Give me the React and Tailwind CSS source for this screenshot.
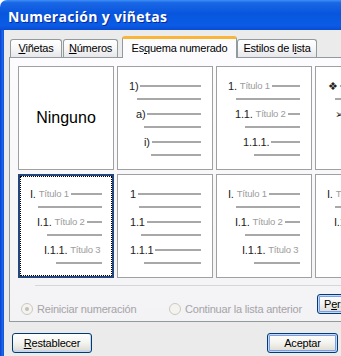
const ui = "font-['Liberation_Sans',Arial,sans-serif]"

function Rule({ className = '' }) {
  return <div className={`h-[2px] bg-[#a8a8a8] ${className}`} />
}

// one numbered level: text row + the line under it
function Level({ pl, num, title, line = true, sub, first }) {
  return (
    <>
      <div className={`flex h-[14px] items-center whitespace-nowrap ${first ? '' : 'mt-[7px]'} ${pl}`}>
        <span className="text-[11px] leading-none text-[#222]">{num}</span>
        {title && <span className="ml-[3px] text-[9.5px] leading-none text-[#9c9c9c]">{title}</span>}
        {line && <Rule className="ml-[2px] flex-1" />}
      </div>
      <Rule className={`mt-[5px] ${sub}`} />
    </>
  )
}

function Cell({ levels, selected, children }) {
  return (
    <div className="relative h-[104px] w-[96px] border border-[#a0a0a0] bg-white">
      {children || (
        <div className="flex flex-col pt-[12px] pr-[11px]">
          {levels.map((l, i) => <Level key={i} first={i === 0} {...l} />)}
        </div>
      )}
      {selected && (
        <div className="absolute -inset-px border-2 border-[#24467c]">
          <div className="absolute inset-0 border border-dotted border-black" />
        </div>
      )}
    </div>
  )
}

const outline = [
  { pl: 'pl-[11px]', num: 'I.', title: 'Título 1', sub: 'ml-[19px]' },
  { pl: 'pl-[18px]', num: 'I.1.', title: 'Título 2', sub: 'ml-[28px]' },
  { pl: 'pl-[25px]', num: 'I.1.1.', title: 'Título 3', line: false, sub: 'ml-[37px]' },
]

const cells = [
  null,
  [
    { pl: 'pl-[11px]', num: '1)', sub: 'ml-[19px]' },
    { pl: 'pl-[18px]', num: 'a)', sub: 'ml-[26px]' },
    { pl: 'pl-[26px]', num: 'i)', sub: 'ml-[33px]' },
  ],
  [
    { pl: 'pl-[11px]', num: '1.', title: 'Título 1', sub: 'ml-[19px]' },
    { pl: 'pl-[18px]', num: '1.1.', title: 'Título 2', sub: 'ml-[28px]' },
    { pl: 'pl-[26px]', num: '1.1.1.', sub: 'ml-[37px]' },
  ],
  [
    { pl: 'pl-[12px]', num: '❖', sub: 'ml-[19px]' },
    { pl: 'pl-[19px]', num: '➢', sub: 'ml-[26px]' },
    { pl: 'pl-[26px]', num: '■', sub: 'ml-[33px]' },
  ],
  outline,
  [
    { pl: 'pl-[12px]', num: '1', sub: 'ml-[21px]' },
    { pl: 'pl-[12px]', num: '1.1', sub: 'ml-[23px]' },
    { pl: 'pl-[12px]', num: '1.1.1', sub: 'ml-[26px]' },
  ],
  outline,
  outline,
]

function Tab({ children, className = '' }) {
  return (
    <div className={`flex h-[18px] items-center justify-center whitespace-nowrap rounded-t-[3px] border border-b-0 border-[#919b9c] bg-gradient-to-b from-white via-[#f7f7f7] to-[#e6e6ec] ${className}`}>
      {children}
    </div>
  )
}

function Radio({ checked, children }) {
  return (
    <div className="flex h-[14px] items-center whitespace-nowrap">
      <div className="flex h-[12px] w-[12px] shrink-0 items-center justify-center rounded-full border border-[#cbc9c0] bg-[#f4f3f0]">
        {checked && <div className="h-[4px] w-[4px] rounded-full bg-[#c2c0b8]" />}
      </div>
      <span className="ml-[4px] text-[#a5a4a8]">{children}</span>
    </div>
  )
}

function Button({ children, className = '', strong }) {
  return (
    <div className={`flex h-[20px] shrink-0 items-center whitespace-nowrap rounded-[3px] border border-[#003c74] bg-gradient-to-b from-white via-[#f3f3ef] to-[#dcd9ce] text-black ${strong ? 'shadow-[inset_0_0_0_1px_#c4d8fb,inset_0_0_0_2px_#7d9ee6]' : 'shadow-[inset_0_-2px_0_0_#c9d5ec,inset_-1px_0_0_0_#c9d5ec]'} ${className}`}>
      {children}
    </div>
  )
}

export default function App() {
  return (
    <div className={`flex h-[356px] w-[341px] flex-col overflow-hidden bg-white text-[11px] tracking-[-0.2px] ${ui}`}>
      {/* title bar */}
      <div className="flex h-[30px] shrink-0 items-center rounded-tl-[7px] bg-[linear-gradient(to_bottom,#3d8ff6_0%,#1a67e6_9%,#0856dd_45%,#0a5be6_85%,#0a4bd3_100%)] pl-[8px] pt-[2px]">
        <span className="font-['Open_Sans',sans-serif] text-[14px] font-bold tracking-[0.3px] text-white [text-shadow:1px_1px_#0b2a9a]">
          Numeración y viñetas
        </span>
      </div>

      <div className="flex min-w-0 flex-1">
        <div className="w-[4px] shrink-0 bg-[linear-gradient(to_right,#0a3fd0,#1a67e8_60%,#0b54da)]" />
        <div className="flex min-w-0 flex-1 flex-col bg-[#ecebec]">
          {/* tabs */}
          <div className="ml-[5px] mt-[6px] flex h-[21px] items-end">
            <Tab className="ml-[1px] w-[52px]"><span><u>V</u>iñetas</span></Tab>
            <Tab className="ml-[1px] w-[55px]"><span><u>N</u>úmeros</span></Tab>
            <div className="relative z-10 ml-[4px] -mb-px flex h-[22px] w-[115px] shrink-0 items-center justify-center whitespace-nowrap rounded-t-[3px] border-x border-t-[3px] border-[#919b9c] border-t-[#f9b43a] bg-[#fcfcfe] pb-[1px]">
              <span>Es<u>q</u>uema numerado</span>
            </div>
            <Tab className="w-[80px]"><span>Estilos de l<u>i</u>sta</span></Tab>
          </div>

          {/* panel */}
          <div className="ml-[5px] flex h-[265px] w-[340px] shrink-0 flex-col border border-[#919b9c] bg-gradient-to-b from-[#fcfcfe] to-[#f3f2f4] pl-[8px] pt-[8px]">
            <div className="grid grid-cols-[repeat(4,96px)] gap-x-[3px] gap-y-[4px]">
              {cells.map((c, i) =>
                i === 0 ? (
                  <Cell key={i}>
                    <div className="flex h-full items-center justify-center text-[16px] tracking-normal text-black">Ninguno</div>
                  </Cell>
                ) : (
                  <Cell key={i} levels={c} selected={i === 4} />
                )
              )}
            </div>
            <div className="ml-[17px] mt-[7px] h-px bg-[#d6d5d8]" />
            <div className="mt-[8px] flex items-start">
              <div className="ml-[3px] mt-[8px] w-[148px] shrink-0"><Radio checked>Reiniciar numeración</Radio></div>
              <div className="mt-[8px] w-[148px] shrink-0"><Radio>Continuar la lista anterior</Radio></div>
              <Button strong className="w-[88px] px-[6px]"><span>P<u>e</u>rsonalizar...</span></Button>
            </div>
          </div>

          {/* footer buttons */}
          <div className="mt-[11px] flex">
            <Button className="ml-[8px] w-[80px] justify-center"><span><u>R</u>establecer</span></Button>
            <Button strong className="ml-auto mr-[3px] w-[71px] justify-center">Aceptar</Button>
          </div>
        </div>
      </div>
    </div>
  )
}
